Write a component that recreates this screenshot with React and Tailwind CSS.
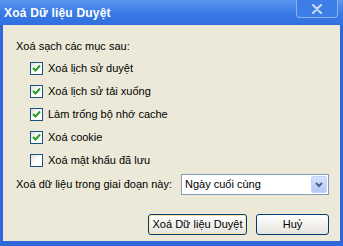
export default function App() {
  const font = { fontFamily: '"Liberation Sans", Arial, sans-serif' };
  const items = [
    { label: "Xoá lịch sử duyệt", checked: true },
    { label: "Xoá lịch sử tải xuống", checked: true },
    { label: "Làm trống bộ nhớ cache", checked: true },
    { label: "Xoá cookie", checked: true },
    { label: "Xoá mật khẩu đã lưu", checked: false },
  ];
  return (
    <div className="w-[343px] h-[246px] flex flex-col bg-[#2f66dc] text-[11px] text-black whitespace-nowrap" style={font}>
      <div className="h-[25px] flex items-start justify-between bg-gradient-to-b from-[#5b98f2] via-[#3a7be6] to-[#3170e0] pl-[4px] pr-[5px]">
        <span className="mt-[6px] text-white font-bold text-[12px] leading-[15px] tracking-[0.2px]">Xoá Dữ liệu Duyệt</span>
        <div className="w-[42px] h-[18px] rounded-b-[4px] border border-t-0 border-[#8fb2ee] bg-[#3d7de8] flex items-center justify-center">
          <svg width="12" height="10" viewBox="0 0 12 10">
            <path d="M2 1 L10 9 M10 1 L2 9" stroke="#c9d8f4" strokeWidth="2.2" strokeLinecap="round" />
          </svg>
        </div>
      </div>
      <div className="flex-1 mx-[3px] mb-[5px] bg-[#ece9d8] flex flex-col pl-[13px] pr-[11px]">
        <div className="mt-[15px] leading-[13px]">Xoá sạch các mục sau:</div>
        <div className="flex flex-col gap-[10px] mt-[9px] pl-[14px]">
          {items.map((it) => (
            <div key={it.label} className="flex items-center gap-[5px] h-[13px]">
              <div className="w-[13px] h-[13px] border border-[#1c5180] bg-gradient-to-br from-[#dcdcd7] via-white to-white flex items-center justify-center">
                {it.checked && (
                  <svg width="9" height="9" viewBox="0 0 9 9">
                    <path d="M1 4 L3.5 6.5 L8 1.5" stroke="#21a121" strokeWidth="2" fill="none" />
                  </svg>
                )}
              </div>
              <span className="leading-[13px]">{it.label}</span>
            </div>
          ))}
        </div>
        <div className="flex items-center justify-between mt-[7px]">
          <span>Xoá dữ liệu trong giai đoạn này:</span>
          <div className="w-[148px] h-[21px] border border-[#7f9db9] bg-white flex items-center justify-between pl-[3px] pr-[1px]">
            <span>Ngày cuối cùng</span>
            <div className="w-[16px] h-[17px] rounded-[2px] bg-gradient-to-b from-[#d6e2fc] to-[#b3c9f7] border border-[#c3d3fd] flex items-center justify-center">
              <svg width="8" height="6" viewBox="0 0 8 6">
                <path d="M1 1 L4 4 L7 1" stroke="#4d6185" strokeWidth="2" fill="none" />
              </svg>
            </div>
          </div>
        </div>
        <div className="flex justify-end gap-[9px] mt-[19px]">
          <button className="w-[99px] h-[21px] rounded-[3px] border border-[#003c74] bg-gradient-to-b from-white to-[#e6e4dc] shadow-[inset_0_0_0_1px_#ffe7a2]">Xoá Dữ liệu Duyệt</button>
          <button className="w-[73px] h-[21px] rounded-[3px] border border-[#003c74] bg-gradient-to-b from-white to-[#e6e4dc]">Huỷ</button>
        </div>
      </div>
    </div>
  );
}
